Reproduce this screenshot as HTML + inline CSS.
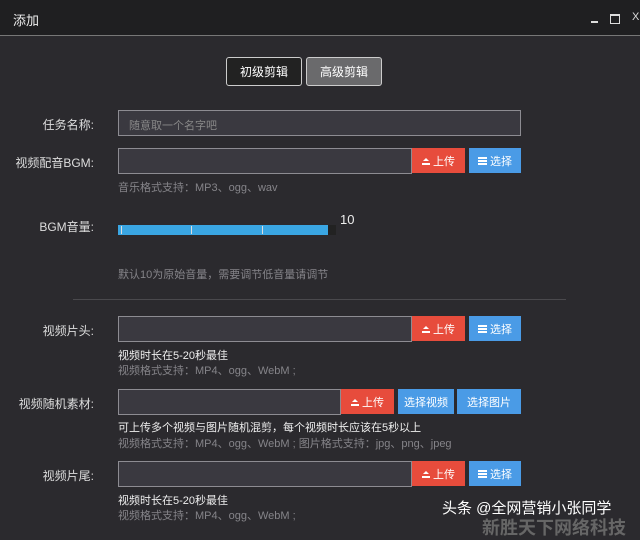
<html><head><style>
body{margin:0;width:640px;height:532px;background:#2b2a2e;font-family:"Liberation Sans","Noto Sans CJK SC",sans-serif;position:relative;overflow:hidden;color:#ddd}
.a{position:absolute}
.lbl{position:absolute;right:546px;font-size:12px;color:#ddd;white-space:nowrap}
.inp{position:absolute;left:118px;background:#3a3940;border:1px solid #8d8c92;box-sizing:border-box;height:26px}
.btn{position:absolute;height:25px;font-size:11px;color:#fff;display:flex;align-items:center;justify-content:center;box-sizing:border-box}
.r{background:#e74c3c}.b{background:#4a9be6}
.h1{position:absolute;left:118px;font-size:11px;color:#eee}
.h2{position:absolute;left:118px;font-size:11px;color:#858489}
.up{display:inline-block;width:8px;height:8px;margin-right:3px;border-bottom:2px solid #fff;box-sizing:border-box;position:relative}
.up:before{content:"";position:absolute;left:1px;top:-2px;border:3px solid transparent;border-bottom:3px solid #fff}
.ls{display:inline-block;width:9px;height:8px;margin-right:3px;background:repeating-linear-gradient(#fff 0 2px,transparent 2px 3px)}
</style></head><body>
<div class="a" style="left:0;top:0;width:640px;height:35px;background:#1f1f21;border-bottom:1px solid #777"></div>
<div class="a" style="left:13px;top:10px;font-size:13px;color:#eee">添加</div>
<div class="a" style="left:591px;top:21px;width:7px;height:2px;background:#ddd"></div>
<div class="a" style="left:610px;top:14px;width:8px;height:7px;border:1px solid #ddd;border-top-width:2px"></div>
<div class="a" style="left:632px;top:11px;font-size:11px;color:#ddd">X</div>

<div class="btn" style="left:226px;top:57px;width:76px;height:29px;border:1px solid #ccc;border-radius:3px;background:#222;font-size:12px">初级剪辑</div>
<div class="btn" style="left:306px;top:57px;width:76px;height:29px;border:1px solid #ccc;border-radius:3px;background:#6a6a6c;font-size:12px">高级剪辑</div>

<div class="lbl" style="top:116px">任务名称:</div>
<div class="inp" style="top:110px;width:403px;font-size:11px;color:#888;padding:6px 10px">随意取一个名字吧</div>

<div class="lbl" style="top:154px">视频配音BGM:</div>
<div class="inp" style="top:148px;width:294px"></div>
<div class="btn r" style="left:412px;top:148px;width:53px"><span class="up"></span>上传</div>
<div class="btn b" style="left:469px;top:148px;width:52px"><span class="ls"></span>选择</div>
<div class="h2" style="top:179px">音乐格式支持：MP3、ogg、wav</div>

<div class="lbl" style="top:218px">BGM音量:</div>
<div class="a" style="left:118px;top:225px;width:218px;height:10px;background:#222"></div>
<div class="a" style="left:118px;top:225px;width:210px;height:10px;background:#3aa6e3"></div>
<div class="a" style="left:121px;top:226px;width:1px;height:8px;background:#ddd"></div>
<div class="a" style="left:191px;top:226px;width:1px;height:8px;background:#ddd"></div>
<div class="a" style="left:262px;top:226px;width:1px;height:8px;background:#ddd"></div>
<div class="a" style="left:340px;top:212px;font-size:13px;color:#eee">10</div>
<div class="h2" style="top:266px">默认10为原始音量，需要调节低音量请调节</div>
<div class="a" style="left:73px;top:299px;width:493px;height:1px;background:#4a494d"></div>

<div class="lbl" style="top:322px">视频片头:</div>
<div class="inp" style="top:316px;width:294px"></div>
<div class="btn r" style="left:412px;top:316px;width:53px"><span class="up"></span>上传</div>
<div class="btn b" style="left:469px;top:316px;width:52px"><span class="ls"></span>选择</div>
<div class="h1" style="top:347px">视频时长在5-20秒最佳</div>
<div class="h2" style="top:362px">视频格式支持：MP4、ogg、WebM ;</div>

<div class="lbl" style="top:395px">视频随机素材:</div>
<div class="inp" style="top:389px;width:223px"></div>
<div class="btn r" style="left:341px;top:389px;width:53px"><span class="up"></span>上传</div>
<div class="btn b" style="left:398px;top:389px;width:56px">选择视频</div>
<div class="btn b" style="left:457px;top:389px;width:64px">选择图片</div>
<div class="h1" style="top:419px">可上传多个视频与图片随机混剪，每个视频时长应该在5秒以上</div>
<div class="h2" style="top:435px">视频格式支持：MP4、ogg、WebM ; 图片格式支持：jpg、png、jpeg</div>

<div class="lbl" style="top:467px">视频片尾:</div>
<div class="inp" style="top:461px;width:294px"></div>
<div class="btn r" style="left:412px;top:461px;width:53px"><span class="up"></span>上传</div>
<div class="btn b" style="left:469px;top:461px;width:52px"><span class="ls"></span>选择</div>
<div class="h1" style="top:492px">视频时长在5-20秒最佳</div>
<div class="h2" style="top:507px">视频格式支持：MP4、ogg、WebM ;</div>

<div class="a" style="left:442px;top:497px;font-size:15px;color:#fff">头条 @全网营销小张同学</div>
<div class="a" style="left:482px;top:514px;font-size:18px;font-weight:bold;color:#666">新胜天下网络科技</div>
</body></html>
